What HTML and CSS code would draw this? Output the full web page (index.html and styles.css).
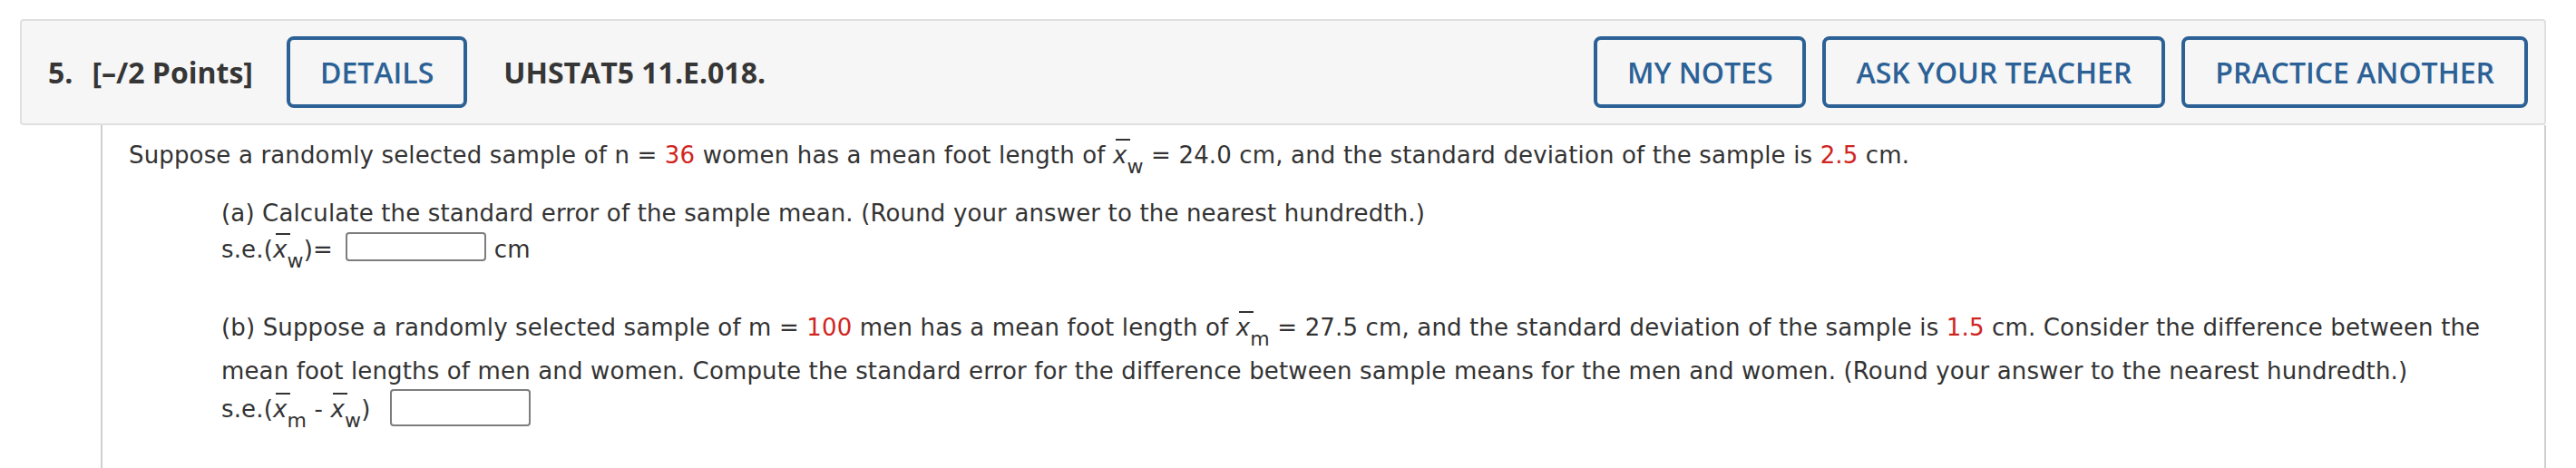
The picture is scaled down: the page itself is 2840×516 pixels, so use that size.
FILE: index.html
```html
<!DOCTYPE html>
<html lang="en">
<head>
    <title>UHSTAT5 11.E.018.</title>
    <link rel="stylesheet" href="styles.css">
</head>
<body>
    <div class="question">
        <div class="q-header">
            <span class="q-num">5.</span>
            <span class="q-points">[&ndash;/2 Points]</span>
            <button class="btn">DETAILS</button>
            <span class="q-id">UHSTAT5 11.E.018.</span>
            <div class="q-actions">
                <button class="btn">MY NOTES</button>
                <button class="btn">ASK YOUR TEACHER</button>
                <button class="btn">PRACTICE ANOTHER</button>
            </div>
        </div>

        <div class="q-body">
            <p class="intro">
                Suppose a randomly selected sample of n = <span class="val">36</span> women has a mean foot length of
                <span class="xbar">x</span><span class="sub">w</span> = 24.0 cm, and the standard deviation of the sample is <span class="val">2.5</span> cm.
            </p>

            <div class="part part-a">
                (a) Calculate the standard error of the sample mean. (Round your answer to the nearest hundredth.)<br>
                s.e.(<span class="xbar">x</span><span class="sub">w</span>)= <input type="text" class="answer answer-a"> cm
            </div>

            <div class="part part-b">
                (b) Suppose a randomly selected sample of m = <span class="val">100</span> men has a mean foot length of
                <span class="xbar">x</span><span class="sub">m</span> = 27.5 cm, and the standard deviation of the sample is <span class="val">1.5</span> cm. Consider the difference between the
                mean foot lengths of men and women. Compute the standard error for the difference between sample means for the men and women. (Round your answer to the nearest hundredth.)<br>
                s.e.(<span class="xbar">x</span><span class="sub">m</span> - <span class="xbar">x</span><span class="sub">w</span>) <input type="text" class="answer answer-b">
            </div>
        </div>
    </div>
</body>
</html>
```

FILE: styles.css
```css
body {
    margin: 0;
    padding: 0;
    background: #fff;
    color: #333;
}
.question {
    padding: 21px 33px 0 22px;
}
.q-header {
    display: flex;
    align-items: center;
    background: #f6f6f6;
    border: 2px solid #e0e0e0;
    border-radius: 4px;
    padding: 17px 18px 17px 29px;
    font-family: 'Open Sans', sans-serif;
    font-size: 32px;
    font-weight: 700;
    color: #363636;
}
.q-num {
    margin-right: 21px;
}
.q-points {
    margin-right: 37px;
}
.q-id {
    margin-left: 40px;
}
.q-actions {
    display: flex;
    gap: 18px;
    margin-left: auto;
}
.btn {
    height: 79px;
    padding: 0 33px;
    background: transparent;
    border: 4px solid #2c6196;
    border-radius: 8px;
    font-family: 'Open Sans', sans-serif;
    font-size: 32px;
    font-weight: 600;
    color: #2c6196;
    cursor: pointer;
}
.q-body {
    margin-left: 89px;
    border-left: 2px solid #cfcfcf;
    border-right: 2px solid #cfcfcf;
    padding: 13px 40px 40px 29px;
    font-family: 'DejaVu Sans', Verdana, sans-serif;
    font-size: 26px;
    line-height: 40px;
    letter-spacing: 0.15px;
    color: #333;
}
.intro {
    margin: 0 0 16px;
}
.part {
    margin: 0 0 38px 102px;
}
.val {
    color: #d0251f;
}
.xbar {
    position: relative;
    font-style: italic;
}
.xbar::after {
    content: "";
    position: absolute;
    left: 3px;
    top: -3px;
    width: 16px;
    height: 2px;
    background: #333;
}
.sub {
    font-size: 22px;
    line-height: 31px;
    vertical-align: -11px;
}
.answer {
    width: 155px;
    box-sizing: border-box;
    border: 2px solid #7d7d7d;
    border-radius: 4px;
    background: #fff;
    padding: 0 6px;
}
.answer-a {
    height: 32px;
    margin-left: 6px;
    vertical-align: text-bottom;
    margin-bottom: 2px;
}
.answer-b {
    height: 41px;
    margin-left: 13px;
    vertical-align: middle;
    margin-bottom: 6px;
}
```
